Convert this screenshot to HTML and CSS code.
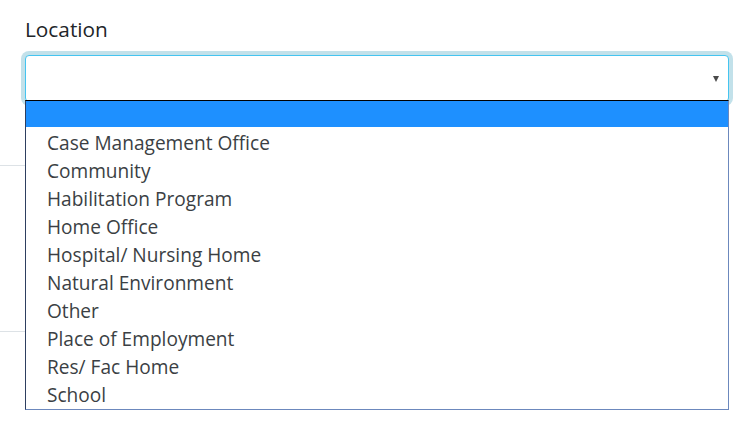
FILE: index.html
```html
<!DOCTYPE html>
<html>
<head>
<meta charset="utf-8">
<link rel="stylesheet" href="styles.css">
</head>
<body>
<div class="page">
  <div class="field">
    <label class="label">Location</label>
    <div class="select"><span class="caret"></span></div>
    <ul class="dropdown">
      <li class="opt blank"></li>
      <li class="opt">Case Management Office</li>
      <li class="opt">Community</li>
      <li class="opt">Habilitation Program</li>
      <li class="opt">Home Office</li>
      <li class="opt">Hospital/ Nursing Home</li>
      <li class="opt">Natural Environment</li>
      <li class="opt">Other</li>
      <li class="opt">Place of Employment</li>
      <li class="opt">Res/ Fac Home</li>
      <li class="opt">School</li>
    </ul>
  </div>
  <div class="rule rule-one"></div>
  <div class="rule rule-two"></div>
</div>
</body>
</html>
```
FILE: styles.css
```css
html, body {
  margin: 0;
  padding: 0;
  background: #fff;
}
.page {
  width: 753px;
  height: 425px;
  overflow: hidden;
  font-family: "Open Sans", "Noto Sans", sans-serif;
  color: #212529;
}
.field {
  position: relative;
  padding: 14px 0 0 25px;
}
.label {
  display: block;
  font-size: 20.8px;
  line-height: 30px;
  color: #212529;
}
.select {
  position: relative;
  margin-top: 11px;
  box-sizing: border-box;
  width: 704px;
  height: 47px;
  border: 1px solid #45c4f0;
  border-radius: 4px;
  box-shadow: 0 0 0 4px #c2e1ea;
  background: #fff;
}
.caret {
  position: absolute;
  right: 9px;
  top: 20px;
  width: 0;
  height: 0;
  border-left: 3.5px solid transparent;
  border-right: 3.5px solid transparent;
  border-top: 6px solid #4a4a4a;
}
.dropdown {
  position: absolute;
  left: 25px;
  top: 100px;
  box-sizing: border-box;
  width: 704px;
  height: 310px;
  margin: 0;
  padding: 0;
  list-style: none;
  background: #fff;
  border: 1px solid #6c88bd;
  border-top-color: #000;
  border-left-color: #2e3f60;
  z-index: 2;
}
.opt {
  height: 28px;
  line-height: 28px;
  padding-left: 21px;
  font-size: 19.1px;
  color: #3b3f44;
  white-space: nowrap;
}
.opt.blank {
  height: 26px;
  margin-bottom: 2px;
  background: #1e90ff;
}
.rule {
  width: 100px;
  height: 1px;
  background: #dde2e6;
}
.rule-one {
  margin-top: 63px;
}
.rule-two {
  margin-top: 165px;
}
```
